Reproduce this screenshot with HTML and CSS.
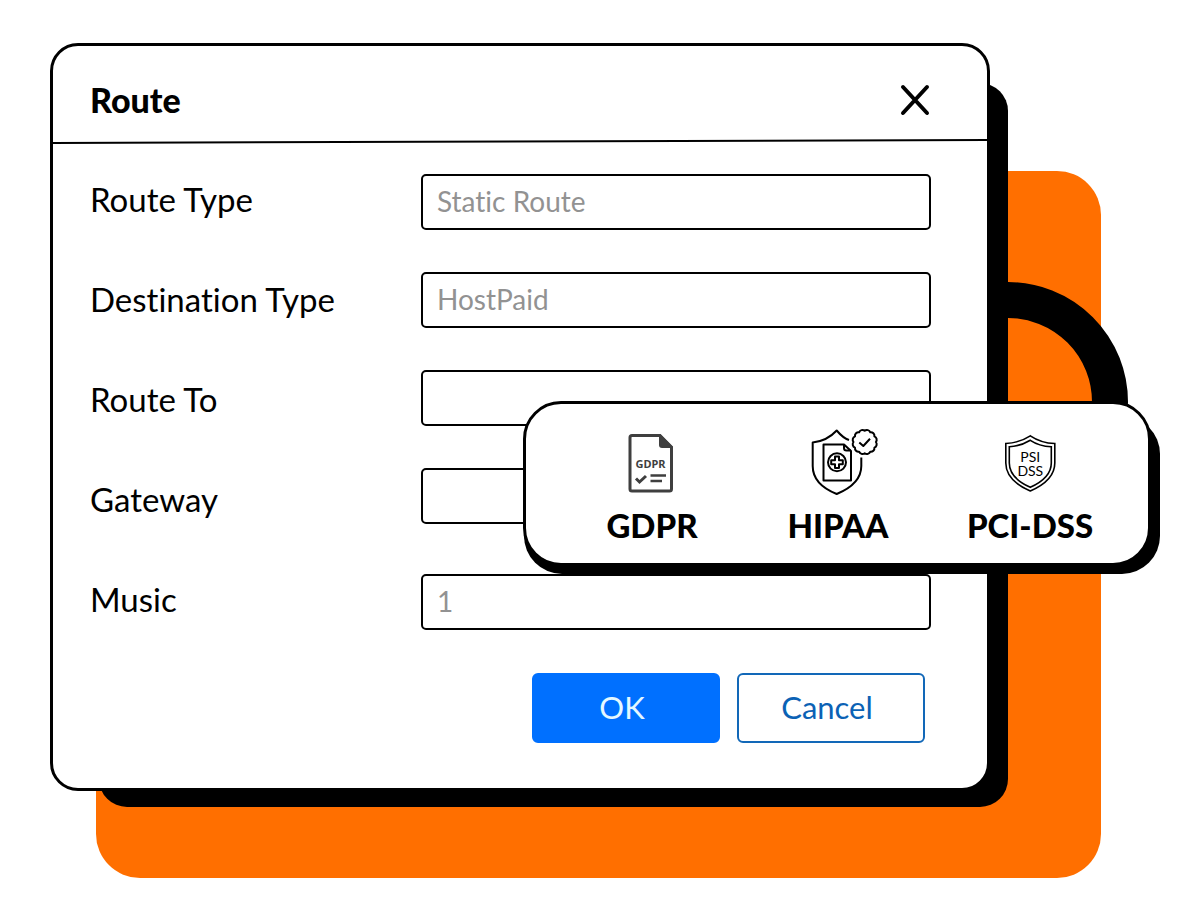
FILE: index.html
```html
<!DOCTYPE html>
<html lang="en">
<head>
    <meta charset="UTF-8">
    <meta name="viewport" content="width=device-width, initial-scale=1.0">
    <title>Route</title>
    <link rel="stylesheet" href="styles.css">
</head>
<body>
    <main class="stage">
        <div class="backdrop"></div>
        <div class="ring"></div>

        <section class="dialog">
            <div class="dialog-panel">
                <header class="dialog-header">
                    <h1 class="dialog-title">Route</h1>
                    <button type="button" class="close-btn" aria-label="Close">
                        <svg width="30" height="32" viewBox="0 0 30 32" fill="none" stroke="#000" stroke-width="4" stroke-linecap="round">
                            <path d="M3 3L27 29M27 3L3 29"/>
                        </svg>
                    </button>
                </header>
                <svg class="divider" stroke="#000" stroke-width="2">
                    <line x1="0" y1="4" x2="100%" y2="1"/>
                </svg>

                <form class="route-form">
                    <div class="labels">
                        <label for="routeType">Route Type</label>
                        <label for="destinationType">Destination Type</label>
                        <label for="routeTo">Route To</label>
                        <label for="gateway">Gateway</label>
                        <label for="music">Music</label>
                    </div>
                    <div class="fields">
                        <input type="text" class="form-input" id="routeType" placeholder="Static Route">
                        <input type="text" class="form-input" id="destinationType" placeholder="HostPaid">
                        <input type="text" class="form-input" id="routeTo">
                        <input type="text" class="form-input" id="gateway">
                        <input type="text" class="form-input last" id="music" placeholder="1">
                    </div>
                    <div class="actions">
                        <button type="button" class="btn btn-ok">OK</button>
                        <button type="button" class="btn btn-cancel">Cancel</button>
                    </div>
                </form>
            </div>
        </section>

        <aside class="compliance">
            <ul class="compliance-list">
                <li>
                    <svg class="icon" viewBox="0 0 80 66" fill="none" stroke="#3f3f3f">
                        <path d="M20 6.5H48L59.5 18V60Q59.5 62 57.5 62H20Q18 62 18 60V8.5Q18 6.5 20 6.5Z" stroke-width="3"/>
                        <path d="M47 5H48L61 18V19H50Q47 19 47 16Z" fill="#3f3f3f" stroke="none"/>
                        <text class="icon-text-bold" x="38.5" y="38.5">GDPR</text>
                        <path d="M24 49.5L27.5 53L34 47" stroke-width="3"/>
                        <path d="M38.5 46.5H54M38.5 52H50" stroke-width="2.6"/>
                    </svg>
                    <span>GDPR</span>
                </li>
                <li>
                    <svg class="icon" viewBox="0 0 80 66" fill="none" stroke="#000" stroke-width="2" stroke-linejoin="round">
                        <path d="M51 11Q45 9 38.7 1.5Q29 12 14.7 13.5V37C14.7 51 25 59.5 38.7 65C52 59.5 63.3 51 63.3 37V28.5"/>
                        <path d="M25.5 15.5H46L53 22V51.5H25.5Z"/>
                        <path d="M46 15.5V19Q46 21.5 48.5 21.5H53"/>
                        <circle cx="39" cy="33.3" r="9"/>
                        <path d="M37 27.5H41V31.3H44.8V35.3H41V39.1H37V35.3H33.2V31.3H37Z"/>
                        <path d="M77.9 13A3.6 3.6 0 0 1 76.4 18.6A3.6 3.6 0 0 1 72.3 22.7A3.6 3.6 0 0 1 66.7 24.2A3.6 3.6 0 0 1 61.1 22.7A3.6 3.6 0 0 1 57 18.6A3.6 3.6 0 0 1 55.5 13A3.6 3.6 0 0 1 57 7.4A3.6 3.6 0 0 1 61.1 3.3A3.6 3.6 0 0 1 66.7 1.8A3.6 3.6 0 0 1 72.3 3.3A3.6 3.6 0 0 1 76.4 7.4A3.6 3.6 0 0 1 77.9 13Z"/>
                        <path d="M61.3 13.5L65.3 17L72 9.7"/>
                    </svg>
                    <span>HIPAA</span>
                </li>
                <li>
                    <svg class="icon" viewBox="0 0 80 66" fill="none" stroke="#000" stroke-width="1.6">
                        <path d="M40.3 6.8Q51 14 64.8 14.5V34C64.8 48 54 56 40.3 62C26.5 56 15.8 48 15.8 34V14.5Q29 14 40.3 6.8Z"/>
                        <path d="M40.3 11.3Q49 17 61.3 17.8V34C61.3 46 52 53 40.3 58.3C28.5 53 19.3 46 19.3 34V17.8Q31 17 40.3 11.3Z"/>
                        <text class="icon-text" x="40.3" y="32.5">PSI</text>
                        <text class="icon-text" x="40.3" y="47">DSS</text>
                    </svg>
                    <span>PCI-DSS</span>
                </li>
            </ul>
        </aside>
    </main>
</body>
</html>
```

FILE: styles.css
```css
* {
    margin: 0;
    padding: 0;
    box-sizing: border-box;
}

body {
    font-family: Lato, 'Liberation Sans', sans-serif;
    font-variant-ligatures: none;
    background: #fff;
    color: #000;
}

.stage {
    position: relative;
    min-height: 100vh;
    padding: 43px 191px 128px 50px;
    overflow: hidden;
}

/* decoration behind the dialog */
.backdrop {
    position: absolute;
    top: 171px;
    right: 80px;
    bottom: 41px;
    left: 96px;
    background: #ff6f00;
    border-radius: 44px;
}

.ring {
    position: absolute;
    top: 282px;
    right: 53px;
    width: 240px;
    height: 240px;
    border: 36px solid #000;
    border-radius: 50%;
}

.dialog {
    position: relative;
}

.dialog::before {
    content: '';
    position: absolute;
    top: 40px;
    right: -18px;
    bottom: -16px;
    left: 49px;
    background: #000;
    border-radius: 28px;
}

.dialog-panel {
    position: relative;
    background: #fff;
    border: 3px solid #000;
    border-radius: 28px;
}

.dialog-header {
    display: flex;
    align-items: center;
    justify-content: space-between;
    padding: 30px 57px 15px 37px;
}

.dialog-title {
    font-size: 34px;
    font-weight: 900;
    line-height: 48px;
}

.close-btn {
    display: flex;
    background: none;
    border: none;
    cursor: pointer;
}

.divider {
    display: block;
    width: 100%;
    height: 5px;
}

.route-form {
    display: grid;
    grid-template-columns: 331px 1fr;
    padding: 5px 56px 45px 37px;
}

.labels label {
    display: block;
    font-size: 33px;
    line-height: 100px;
}

.fields {
    display: flex;
    flex-direction: column;
    gap: 42px;
    padding-top: 25px;
}

.form-input {
    width: 100%;
    height: 56px;
    padding: 0 14px 2px;
    border: 2px solid #000;
    border-radius: 5px;
    background: #fff;
    font-family: inherit;
    font-size: 28px;
    font-variant-ligatures: none;
}

.form-input::placeholder {
    color: #929292;
    opacity: 1;
}

.form-input.last {
    margin-top: 8px;
}

.actions {
    grid-column: 1 / -1;
    display: flex;
    justify-content: flex-end;
    gap: 17px;
    padding: 24px 6px 0 0;
}

.btn {
    width: 188px;
    height: 70px;
    padding: 0 8px 2px 0;
    border: 2px solid #0070ff;
    border-radius: 6px;
    font-family: inherit;
    font-size: 31px;
    cursor: pointer;
}

.btn-ok {
    background: #0070ff;
    color: #e4f8ff;
}

.btn-cancel {
    background: #fff;
    border-color: #1268b8;
    color: #0b62b5;
}

/* floating card over the dialog */
.compliance {
    position: absolute;
    top: 401px;
    right: 30px;
    width: 628px;
}

.compliance::before {
    content: '';
    position: absolute;
    top: 15px;
    right: -9px;
    bottom: -8px;
    left: 1px;
    background: #000;
    border-radius: 38px;
}

.compliance-list {
    position: relative;
    display: grid;
    grid-template-columns: 186fr 186fr 198fr;
    padding: 25px 19px 16px 33px;
    background: #fff;
    border: 3px solid #000;
    border-radius: 38px;
    list-style: none;
}

.compliance-list li {
    display: flex;
    flex-direction: column;
    align-items: center;
    gap: 8px;
    font-size: 33px;
    font-weight: 900;
    line-height: 44px;
}

.icon {
    width: 80px;
    height: 66px;
    overflow: visible;
}

.icon-text,
.icon-text-bold {
    font-size: 14px;
    font-weight: 400;
    text-anchor: middle;
    fill: #000;
    stroke: none;
}

.icon-text-bold {
    font-family: 'Noto Sans', sans-serif;
    font-size: 11px;
    font-weight: 700;
    fill: #3f3f3f;
}
```
